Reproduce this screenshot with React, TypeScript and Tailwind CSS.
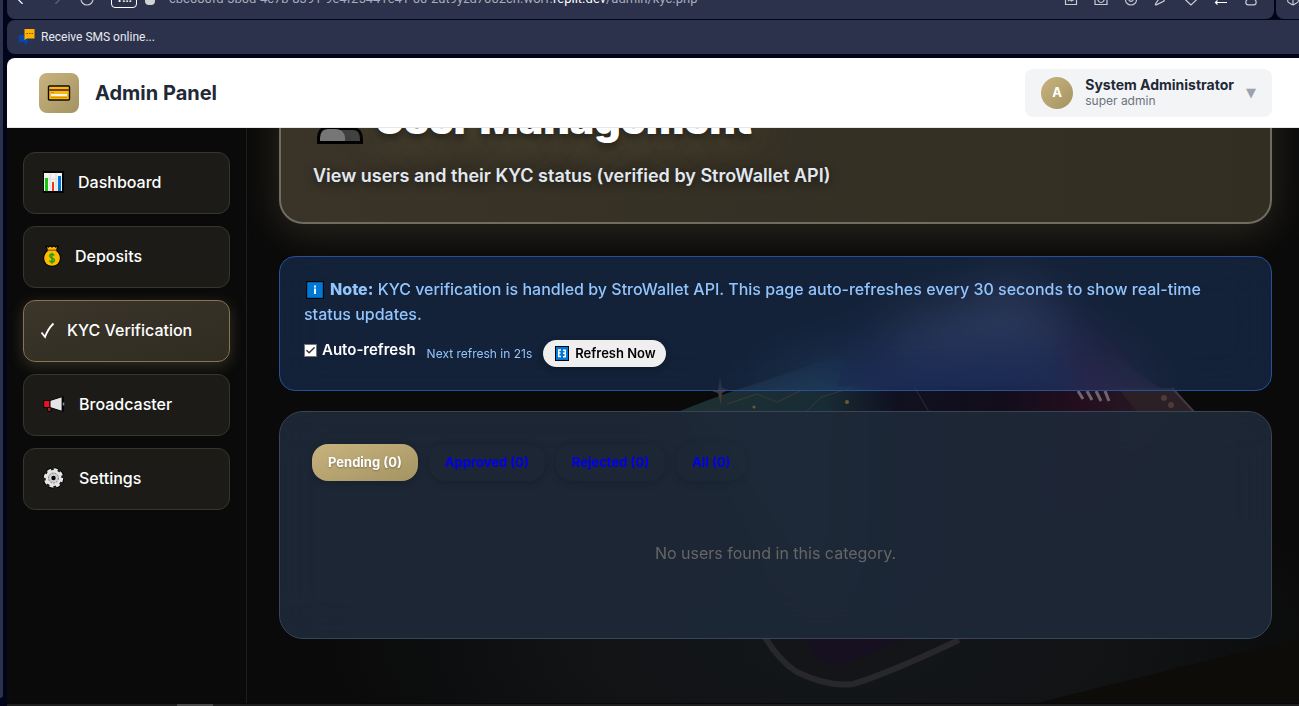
import React, { useState } from "react";
import { Box, Check, ChevronLeft, ChevronRight, RotateCw } from "lucide-react";

function CardIcon() {
  return (
    <svg width="24" height="18" viewBox="0 0 24 18" aria-hidden="true">
      <rect x="1.5" y="2" width="21" height="14" rx="1" fill="#ffb900" stroke="#0a0a0a" strokeWidth="1.4" />
      <rect x="2.2" y="5" width="19.6" height="2" fill="#6b4432" />
      <rect x="4" y="10" width="16" height="2" fill="#f2f2f2" />
      <path d="M4 8.5h3M4 13.6h16" stroke="#d48c00" strokeWidth="1" />
    </svg>
  );
}

function ChartIcon() {
  return (
    <svg width="21" height="22" viewBox="0 0 21 22" aria-hidden="true">
      <rect width="21" height="22" fill="#050505" />
      <rect x="1" y="2" width="18" height="18" fill="#f3f3f3" />
      <path d="M1 8h18M7 2v18M13 2v18" stroke="#dcdcdc" />
      <rect x="2" y="7" width="3" height="13" fill="#16c60c" />
      <rect x="9" y="11" width="2" height="9" fill="#f03a17" />
      <rect x="15" y="5" width="3" height="15" fill="#0078d7" />
    </svg>
  );
}

function MoneyBagIcon() {
  return (
    <svg width="18" height="22" viewBox="0 0 18 22" aria-hidden="true">
      <path
        d="M3 1l2.500 1L7 .7l2 1.300L11 .7l1.500 1.300L15 1l-1.500 4.500c2.600 1.800 4 4.500 4 7.800 0 5-3.500 8-8.500 8S.6 18.300.6 13.300c0-3.300 1.400-6 3.900-7.800z"
        fill="#ffb900"
        stroke="#050505"
        strokeWidth="1.2"
      />
      <path d="M4.500 5.200h9" stroke="#8e562e" strokeWidth="1.200" />
      <path
        d="M11.300 10.500c-.4-.9-1.200-1.300-2.300-1.300-1.300 0-2.300.7-2.300 1.800 0 2.600 4.700 1.400 4.700 4.100 0 1.200-1 2-2.400 2-1.200 0-2.200-.6-2.500-1.600M9 7.700v11"
        fill="none"
        stroke="#13a10e"
        strokeWidth="1.4"
      />
    </svg>
  );
}

function TickIcon() {
  return (
    <svg width="15" height="17" viewBox="0 0 15 17" aria-hidden="true">
      <path d="M1.500 10.500l3.500 4.500C7 9.500 9.800 5 13.500 1.500" fill="none" stroke="#fff" strokeWidth="1.800" />
    </svg>
  );
}

function MegaphoneIcon() {
  return (
    <svg width="22" height="16" viewBox="0 0 22 16" aria-hidden="true">
      <path d="M4 11h4v4.500H5z" fill="#a4262c" stroke="#050505" />
      <path d="M.7 4.500H7v7H.7z" fill="#e81224" stroke="#050505" />
      <path d="M7 4.500L18 1h2.500v14H18L7 11.500z" fill="#e6e6e6" stroke="#050505" />
      <path d="M19.600 .5v15" stroke="#050505" strokeWidth="2" />
      <path d="M20.500 6.500v3" stroke="#8a8a8a" strokeWidth="1.500" />
    </svg>
  );
}

function GearIcon() {
  return (
    <svg width="22" height="22" viewBox="0 0 22 22" aria-hidden="true">
      <circle cx="10.500" cy="11" r="8.800" fill="none" stroke="#050505" strokeWidth="4" strokeDasharray="4.400 2.500" />
      <circle cx="10.500" cy="11" r="8.500" fill="none" stroke="#e6e6e6" strokeWidth="2.400" strokeDasharray="4 2.670" />
      <circle cx="10.500" cy="11" r="8" fill="#e6e6e6" />
      <circle cx="10.500" cy="11" r="5" fill="#d0d0d0" stroke="#7a7a7a" strokeDasharray="2 1" />
      <circle cx="10.500" cy="11" r="2.200" fill="#050505" />
    </svg>
  );
}

function PeopleIcon() {
  return (
    <svg width="46" height="46" viewBox="0 0 46 46" aria-hidden="true">
      <circle cx="32" cy="14" r="8.500" fill="#404040" stroke="#000" strokeWidth="2.500" />
      <path d="M8 44.500H44.500V41c0-6-3-10.500-9-10.500H20z" fill="#404040" stroke="#000" strokeWidth="3" />
      <circle cx="16" cy="13" r="9" fill="#767676" stroke="#000" strokeWidth="2.500" />
      <path d="M3 43V40c0-5 3-9 8-9h8c5 0 9 4 9 9v3z" fill="#767676" />
      <path d="M28 44.500H1.500V40c0-6 3-10.500 9-10.500h12" fill="none" stroke="#000" strokeWidth="3" />
    </svg>
  );
}

function InfoIcon() {
  return (
    <svg className="mr-1 inline-block align-[-4px]" width="22" height="18" viewBox="0 0 22 18" aria-hidden="true">
      <rect x="2.600" y=".6" width="16.800" height="16.800" fill="#0078d7" stroke="#050505" strokeWidth="1.200" />
      <path d="M11 4.500v2M11 7.500v5.500" stroke="#fff" strokeWidth="2" />
    </svg>
  );
}

function RefreshIcon() {
  return (
    <svg width="14" height="15" viewBox="0 0 14 15" aria-hidden="true">
      <rect x=".5" y=".5" width="13" height="14" fill="#0078d7" stroke="#050505" />
      <path
        d="M6 4H3.700v6.500H6M3 7h2.500M8 4.300h2.300v2.200M8 10.700h2.300V8M8 7.300h2.800"
        fill="none"
        stroke="#fff"
        strokeWidth="1.500"
      />
    </svg>
  );
}

function SmsIcon() {
  return (
    <svg width="16" height="16" viewBox="0 0 16 16" aria-hidden="true">
      <path d="M0 6h6v5h3v2H8v2H5.500v-2H0z" fill="#0645ad" />
      <path d="M0 15h3M6 15.500h2M10 13h4" stroke="#0a3a8c" strokeWidth="1" />
      <path d="M5.500 0h10v9.500H8L5.500 11z" fill="#ffb300" />
      <path d="M7.500 4.500h1.500M10 4.500h1.500M12.500 4.500H14" stroke="#7a5200" strokeWidth="1.200" />
    </svg>
  );
}

function Backdrop() {
  return (
    <svg
      className="absolute inset-0 h-full w-full"
      viewBox="0 0 1052 575"
      preserveAspectRatio="xMidYMid slice"
      aria-hidden="true"
    >
      <defs>
        <linearGradient id="screen" x1="430" y1="270" x2="950" y2="290" gradientUnits="userSpaceOnUse">
          <stop offset="0" stopColor="#1f3032" />
          <stop offset=".28" stopColor="#182c36" />
          <stop offset=".42" stopColor="#101120" />
          <stop offset=".62" stopColor="#120d1a" />
          <stop offset=".78" stopColor="#240e20" />
          <stop offset=".88" stopColor="#261722" />
          <stop offset="1" stopColor="#1c1416" />
        </linearGradient>
        <radialGradient id="floor" cx=".5" cy=".5" r=".5">
          <stop offset="0" stopColor="#14171a" />
          <stop offset=".5" stopColor="#111315" />
          <stop offset="1" stopColor="#0a0a0a" />
        </radialGradient>
      </defs>
      <rect width="1052" height="575" fill="#0a0a0a" />
      <ellipse cx="600" cy="520" rx="520" ry="190" fill="url(#floor)" />
      <path
        d="M433 283Q480 264 520 252L700 190L760 160Q790 150 815 190L948 285L880 380L700 480L560 480z"
        fill="url(#screen)"
      />
      <path d="M640 200L750 160Q790 150 815 195L820 230L640 240z" fill="#30303f" opacity=".75" />
      <path d="M600 225L810 215L830 258H590z" fill="#13162c" />
      <path d="M471 262l2-14 2 12 6 2-6 3-1 12-3-12-6-2z" fill="#453936" />
      <path d="M480 276l30-10 20 8 25-12M560 283l14-14 30-9M668 260l14 24" fill="none" stroke="#4c4b34" opacity=".5" />
      <circle cx="507" cy="279" r="1.500" fill="#6b5a35" />
      <circle cx="600" cy="274" r="2" fill="#6b5a35" />
      <path d="M831 263l5 8M840 263l5 9M849 263l5 10M858 263l4 10" stroke="#6d686d" strokeWidth="3" />
      <path d="M871 260h56l22 26H892z" fill="#2c2027" />
      <circle cx="917" cy="270" r="3" fill="#4d3b39" />
      <circle cx="924" cy="277" r="3" fill="#4d3b39" />
      <path d="M925 260l24 26" stroke="#44383c" strokeWidth="2" />
      <path d="M516 506Q532 533 550 544Q580 559 606 556Q640 546 712 512" fill="#131518" stroke="#28282b" strokeWidth="6" />
      <path d="M556 508l12 20q12 12 30 8l66-28z" fill="#171020" />
      <path d="M790 575L1052 510V575z" fill="#0d0c09" />
    </svg>
  );
}

const toolbarIcons = [
  { label: "Snapshot", color: "#c9cbd3", d: "M1.500 1.500h11v11H1.500zM4 9l2-1.500 1.500 1.500L10 7.500" },
  { label: "Camera", color: "#c9cbd3", d: "M1 3h12v9.500H1zM7 4.500a3 3 0 1 0 .1 0" },
  { label: "Shield", color: "#c9cbd3", d: "M1.500 2.500L7 1l5.500 1.500V8c0 2.800-2.500 5-5.500 5s-5.500-2.200-5.500-5zM4.800 8c1 1.800 3.400 1.800 4.400 0" },
  { label: "Send", color: "#c9cbd3", d: "M13 1L2 4l2.500 3.500L1.500 12c-.3.700 0 1.200.8.900L10 9z" },
  { label: "Favourites", color: "#c9cbd3", d: "M7 13L1.800 8C-.5 5.500 1 2 4 2c1.500 0 2.500.8 3 2 .5-1.200 1.500-2 3-2 3 0 4.500 3.500 2.200 6z" },
  { label: "Transfer", color: "#ffffff", d: "M1 10.500h12M3.500 8.500l-2 2 2 2M1 3.500h12" },
  { label: "Privacy", color: "#c9cbd3", d: "M4 7a3 3 0 1 1 6 0c3 1.500 2.800 5.800-.2 5.800H4.200C1.200 12.800 1 8.500 4 7z" },
];

function BrowserBars() {
  return (
    <div className="flex shrink-0 flex-col bg-[#02051a] pb-1">
      <div className="flex h-[19px] gap-0.5 overflow-hidden">
        <div className="flex min-w-0 flex-1 overflow-hidden rounded-b-lg bg-[#2c324b]">
          <div className="-mt-5 flex h-[38px] min-w-0 flex-1 items-center pr-4 pl-1 text-[#c9cbd3]">
            <button type="button" aria-label="Back" className="mr-5 text-white">
              <ChevronLeft size={18} strokeWidth={1.500} />
            </button>
            <button type="button" aria-label="Forward" className="mr-3 text-[#62677c]">
              <ChevronRight size={18} strokeWidth={1.500} />
            </button>
            <button type="button" aria-label="Reload" className="mr-4">
              <RotateCw size={16} strokeWidth={1.800} />
            </button>
            <button
              type="button"
              className="mr-2 flex h-[18px] w-[26px] items-center justify-center rounded border border-white font-[Roboto,sans-serif] text-[11px] font-bold text-white"
            >
              1...
            </button>
            <span className="mr-3.5 h-3 w-2.5 rounded-sm bg-[#cfd3d3]" />
            <span className="min-w-0 flex-1 truncate font-[Roboto,sans-serif] text-[13px] leading-5 text-[#a9adbb]">
              cbc080fd-5b0d-4c7b-8391-9e4f25441e41-00-2ut9yzd7002ch.worf.<span className="text-white">replit.dev</span>
              /admin/kyc.php
            </span>
            <div className="flex shrink-0 gap-4">
              {toolbarIcons.map(({ label, color, d }) => (
                <button key={label} type="button" aria-label={label}>
                  <svg width="14" height="14" viewBox="0 0 14 14" fill="none" stroke={color} strokeWidth="1.200">
                    <path d={d} />
                  </svg>
                </button>
              ))}
            </div>
          </div>
        </div>
        <div className="w-[23px] shrink-0 overflow-hidden rounded-bl-lg bg-[#2c324b]">
          <div className="-mt-5 flex h-[38px] items-center pl-2.5">
            <Box className="shrink-0 text-[#d5d7de]" size={14} strokeWidth={1.800} />
          </div>
        </div>
      </div>
      <div className="mt-px flex h-[34px] items-center rounded-l-lg bg-[#2c324b] pl-3">
        <a href="#sms" className="flex items-center gap-1.5 font-[Roboto,sans-serif] text-[12px] text-[#e8eaf0]">
          <SmsIcon />
          Receive SMS online...
        </a>
      </div>
    </div>
  );
}

function TopBar() {
  return (
    <header className="relative z-10 flex h-[70px] shrink-0 items-center justify-between rounded-tl-lg border-b border-[#e5e7eb] bg-white pr-[27px] pl-8">
      <div className="flex items-center gap-4">
        <div className="flex h-10 w-10 items-center justify-center rounded-lg bg-linear-to-br from-[#c9b37e] to-[#a39463]">
          <CardIcon />
        </div>
        <span className="text-[20px] font-bold text-[#1f2937]">Admin Panel</span>
      </div>
      <button type="button" className="flex h-12 items-center gap-3 rounded-lg bg-[#f3f4f6] px-4 text-left">
        <span className="flex h-8 w-8 items-center justify-center rounded-full bg-linear-to-br from-[#c9b37e] to-[#a39463] text-[13px] font-bold text-white">
          A
        </span>
        <span className="flex flex-col">
          <span className="text-[14px] leading-4 font-bold text-[#1f2937]">System Administrator</span>
          <span className="text-[12px] leading-4 text-[#6b7280]">super admin</span>
        </span>
        <span className="font-['DejaVu_Sans',sans-serif] text-[13px] text-[#9ca3af]">▼</span>
      </button>
    </header>
  );
}

const navItems = [
  { label: "Dashboard", Icon: ChartIcon, spacing: "gap-3.5 pl-[19px]" },
  { label: "Deposits", Icon: MoneyBagIcon, spacing: "gap-3.5 pl-[19px]" },
  { label: "KYC Verification", Icon: TickIcon, spacing: "gap-3 pl-4", active: true },
  { label: "Broadcaster", Icon: MegaphoneIcon, spacing: "gap-3.5 pl-[19px]" },
  { label: "Settings", Icon: GearIcon, spacing: "gap-3.5 pl-[19px]" },
];

function Sidebar() {
  return (
    <nav className="flex w-60 shrink-0 flex-col gap-3 border-r border-[#1d1d1d] bg-[#0a0a0a] px-4 py-6">
      {navItems.map(({ label, Icon, spacing, active }) => (
        <a
          key={label}
          href={"#" + label.toLowerCase().replace(" ", "-")}
          aria-current={active ? "page" : undefined}
          className={
            "flex h-[62px] items-center rounded-xl border pb-0.5 text-[16px] font-medium text-white " +
            spacing +
            (active
              ? " border-[#85764f] bg-linear-to-br from-[#3b352a] to-[#302c21] shadow-[0_4px_16px_rgba(201,179,126,0.22)]"
              : " border-[#38352a] bg-[#1c1b17]")
          }
        >
          <Icon />
          {label}
        </a>
      ))}
    </nav>
  );
}

const tabs = ["Pending (0)", "Approved (0)", "Rejected (0)", "All (0)"];

export default function App() {
  const [auto, setAuto] = useState(true);
  const [tab, setTab] = useState(0);

  return (
    <div className="flex h-screen overflow-hidden bg-[#02051a] font-[Inter,sans-serif] antialiased">
      <div className="mb-2 w-[3px] shrink-0 rounded-br bg-[#2c324b]" />
      <div className="ml-1 flex min-w-0 flex-1 flex-col">
        <BrowserBars />
        <TopBar />
        <div className="flex min-h-0 flex-1">
          <Sidebar />
          <main className="relative min-w-0 flex-1 overflow-hidden">
            <Backdrop />
            <div className="relative flex flex-col pr-[27px] pl-8">
              <section className="-mt-[52px] rounded-3xl border-2 border-[#716c61] bg-linear-to-r from-[#393328] to-[#322e22] p-8 shadow-[0_8px_40px_rgba(201,179,126,0.18)]">
                <h1 className="-mt-[18px] flex items-center text-[41px] leading-[54px] font-black text-white [text-shadow:0_4px_8px_rgba(0,0,0,0.5),0_0_40px_rgba(201,179,126,0.4)]">
                  <span className="mr-3 ml-1 pt-1">
                    <PeopleIcon />
                  </span>
                  User Management
                </h1>
                <p className="mt-4 text-[18px] leading-7 font-semibold text-[#e2e8f0] [text-shadow:0_2px_8px_rgba(0,0,0,0.5)]">
                  View users and their KYC status (verified by StroWallet API)
                </p>
              </section>

              <section className="mt-8 rounded-2xl border border-[#28509a] bg-[#3b82f6]/20 px-6 pt-5 pb-[23px] backdrop-blur-xl">
                <p className="text-[16px] leading-[25px] font-medium text-[#93c5fd]">
                  <InfoIcon />
                  <strong className="font-extrabold">Note:</strong> KYC verification is handled by StroWallet API. This
                  page auto-refreshes every 30 seconds to show real-time status updates.
                </p>
                <div className="mt-[13px] flex items-center gap-[11px]">
                  <label className="flex items-center gap-[5px] self-start text-[15px] leading-5 font-semibold text-white">
                    <span className="grid h-[13px] w-[13px] place-items-center">
                      <input
                        type="checkbox"
                        checked={auto}
                        onChange={(e) => setAuto(e.target.checked)}
                        className="peer col-start-1 row-start-1 h-[13px] w-[13px] appearance-none border border-[#767676] bg-white"
                      />
                      <Check
                        className="pointer-events-none invisible col-start-1 row-start-1 text-[#333333] peer-checked:visible"
                        size={11}
                        strokeWidth={3}
                      />
                    </span>
                    Auto-refresh
                  </label>
                  <span className="text-[12px] text-[#93c5fd]">Next refresh in 21s</span>
                  <button
                    type="button"
                    className="flex h-[27px] items-center gap-1.5 rounded-full bg-[#efefef] pr-2.5 pl-3 text-[13px] font-semibold text-black shadow-[0_2px_6px_rgba(0,0,0,0.3)]"
                  >
                    <RefreshIcon />
                    Refresh Now
                  </button>
                </div>
              </section>

              <section className="mt-5 rounded-3xl border border-[#394456] bg-[#1e2938]/90 p-8 backdrop-blur-xl">
                <div className="flex gap-[11px]" role="tablist">
                  {tabs.map((label, i) => (
                    <button
                      key={label}
                      type="button"
                      role="tab"
                      aria-selected={tab === i}
                      onClick={() => setTab(i)}
                      className={
                        "h-[37px] rounded-2xl px-4 text-[13px] font-bold shadow-[0_2px_8px_rgba(0,0,0,0.12)] " +
                        (tab === i
                          ? "bg-linear-to-br from-[#c9b37e] to-[#a39463] text-white [text-shadow:0_1px_2px_rgba(0,0,0,0.3)]"
                          : "text-[#0000ee]")
                      }
                    >
                      {label}
                    </button>
                  ))}
                </div>
                <p className="pt-15 pb-[41px] text-center text-[16px] leading-6 text-[#666666]">
                  No users found in this category.
                </p>
              </section>
            </div>
          </main>
        </div>
        <div className="h-[3px] shrink-0 border-t border-[#08070f] bg-[#1e1e1e] pl-[170px]">
          <div className="h-0.5 w-9 bg-[#484848]" />
        </div>
      </div>
    </div>
  );
}
